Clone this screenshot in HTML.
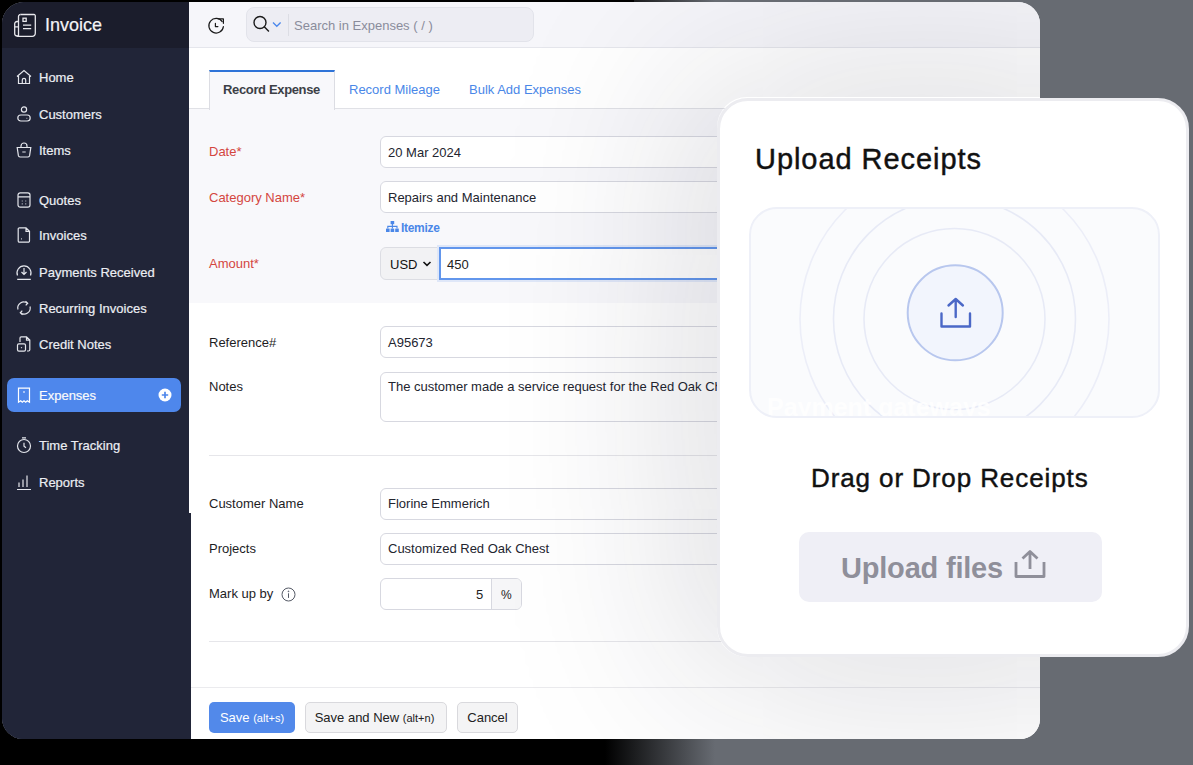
<!DOCTYPE html>
<html><head><meta charset="utf-8">
<style>
*{box-sizing:border-box;margin:0;padding:0}
html,body{width:1193px;height:765px;overflow:hidden}
body{position:relative;background:#676b72;font-family:"Liberation Sans",sans-serif;}
.a{position:absolute}
#bgblack{position:absolute;left:0;top:0;width:1193px;height:765px;
 background:linear-gradient(90deg,#000 0,#000 605px,#676b72 715px,#676b72 100%);}
#bgtop{position:absolute;left:0;top:0;width:634px;height:20px;background:#000}
#bgleft{position:absolute;left:0;top:0;width:20px;height:765px;background:#000}
#win{position:absolute;left:0;top:0;width:1040px;height:739px;overflow:hidden;
 clip-path:inset(2px 0 0 2px round 22px 22px 20px 21px);background:#fff}
.t{position:absolute;font-size:13px;line-height:16px;white-space:nowrap;color:#222}
.nav{color:#eceef3;left:39px;-webkit-text-stroke:0.2px #eceef3}
.nic{position:absolute;left:15px;width:18px;height:18px;overflow:visible}
.lbl{left:209px;color:#1d1d1f}
.red{color:#d4463f}
.inp{position:absolute;left:380px;width:600px;height:32px;border:1px solid #d7d8e0;border-radius:6px;background:#fff}
.itx{left:388px;color:#23252f}
.btn{position:absolute;top:702px;height:31px;border-radius:5px;font-size:13px;line-height:29px;white-space:nowrap;text-align:center}
.small{font-size:11px}
</style></head><body>
<div id="bgblack"></div><div id="bgtop"></div><div id="bgleft"></div>
<div id="win">
  <!-- sidebar -->
  <div class="a" style="left:0;top:0;width:189px;height:739px;background:#212538"></div>
  <div class="a" style="left:0;top:513px;width:191px;height:226px;background:#212538"></div>
  <div class="a" style="left:0;top:0;width:189px;height:48px;background:#1b1d2c"></div>
  <svg class="a" style="left:12px;top:12px" width="26" height="26" viewBox="0 0 26 26" fill="none" stroke="#e8e8ec" stroke-width="1.3">
    <path d="M8.5 2.5h13.5a1.3 1.3 0 0 1 1.3 1.3v17.5a3 3 0 0 1-3 3H5.2"/>
    <path d="M8.5 2.5a2 2 0 0 0-2 2v19.5"/>
    <path d="M6.5 9.5h-1.5a2.3 2.3 0 0 0-2.3 2.3v9.9a2.3 2.3 0 0 0 2.3 2.3h1.5"/>
    <path d="M2.7 14.8h3.8"/>
    <rect x="11" y="6.2" width="3.2" height="3.2"/>
    <path d="M11 13.2h8.2M11 16.7h8.2"/>
  </svg>
  <div class="t nav" style="left:45px;top:15px;font-size:18px;line-height:20px;color:#f4f4f6">Invoice</div>

  <svg class="nic" style="top:68px" viewBox="0 0 18 18" fill="none" stroke="#e4e6ec" stroke-width="1.2"><path d="M2 8.5L9 2.5l7 6M3.5 7.3v8.2h11V7.3M7.3 15.5v-3.5a1.7 1.7 0 0 1 3.4 0v3.5"/></svg>
  <div class="t nav" style="top:70px">Home</div>
  <svg class="nic" style="top:105px" viewBox="0 0 18 18" fill="none" stroke="#e4e6ec" stroke-width="1.2"><circle cx="9" cy="4.5" r="2.6"/><rect x="2.8" y="10" width="12.4" height="6" rx="3"/><path d="M11.6 13.3h.6"/></svg>
  <div class="t nav" style="top:107px">Customers</div>
  <svg class="nic" style="top:141px" viewBox="0 0 18 18" fill="none" stroke="#e4e6ec" stroke-width="1.2"><path d="M6 6.5V5a3 3 0 0 1 6 0v1.5M2.2 6.5h13.6l-1.2 8.2a1.6 1.6 0 0 1-1.6 1.3H5a1.6 1.6 0 0 1-1.6-1.3z M7.3 11h3.4"/></svg>
  <div class="t nav" style="top:143px">Items</div>

  <svg class="nic" style="top:191px" viewBox="0 0 18 18" fill="none" stroke="#e4e6ec" stroke-width="1.2"><rect x="3" y="1.8" width="12" height="14.4" rx="2.2"/><path d="M3 5.8h12M6.8 10h.8M10.4 10h.8M6.8 12.8h.8M10.4 12.8h.8"/></svg>
  <div class="t nav" style="top:193px">Quotes</div>
  <svg class="nic" style="top:226px" viewBox="0 0 18 18" fill="none" stroke="#e4e6ec" stroke-width="1.2"><path d="M4.5 1.8h6.5l3.5 3.5v9.6a1.3 1.3 0 0 1-1.3 1.3H4.5a1.3 1.3 0 0 1-1.3-1.3V3.1a1.3 1.3 0 0 1 1.3-1.3zM11 1.8v3.5h3.5M6 12.8h.8"/></svg>
  <div class="t nav" style="top:228px">Invoices</div>
  <svg class="nic" style="top:263px" viewBox="0 0 18 18" fill="none" stroke="#e4e6ec" stroke-width="1.2"><path d="M2.5 12.5A7 7 0 1 1 15.5 12.5M9 5v6.5M6.5 9l2.5 2.5 2.5-2.5M2.2 16.3h13.6"/></svg>
  <div class="t nav" style="top:265px">Payments Received</div>
  <svg class="nic" style="top:299px" viewBox="0 0 18 18" fill="none" stroke="#e4e6ec" stroke-width="1.2"><path d="M3 10.5a6 6 0 0 1 9.5-6.3M15 7.5a6 6 0 0 1-9.5 6.3M10.5 2.2l2.2 2-2 2.1M7.5 15.8l-2.2-2 2-2.1"/></svg>
  <div class="t nav" style="top:301px">Recurring Invoices</div>
  <svg class="nic" style="top:335px" viewBox="0 0 18 18" fill="none" stroke="#e4e6ec" stroke-width="1.2"><path d="M5 7V3a1.2 1.2 0 0 1 1.2-1.2h5.3l3.3 3.3v9.7a1.2 1.2 0 0 1-1.2 1.2H12M11.5 1.8v3.3h3.3"/><rect x="2.5" y="8.8" width="8" height="7.4" rx="1.4"/><path d="M6.5 12.2v1"/></svg>
  <div class="t nav" style="top:337px">Credit Notes</div>

  <div class="a" style="left:7px;top:378px;width:174px;height:34px;border-radius:7px;background:#4e87ec"></div>
  <svg class="nic" style="top:386px" viewBox="0 0 18 18" fill="none" stroke="#fff" stroke-width="1.2"><path d="M3.5 2.2h11v14l-2.2-1.4-1.6 1.4-1.7-1.4-1.7 1.4-1.6-1.4-2.2 1.4z M8 6h2M9 8.2v.1"/></svg>
  <div class="t nav" style="top:388px;color:#fff">Expenses</div>
  <svg class="a" style="left:158px;top:388px" width="14" height="14" viewBox="0 0 14 14"><circle cx="7" cy="7" r="6.5" fill="#fff"/><path d="M7 3.8v6.4M3.8 7h6.4" stroke="#4e87ec" stroke-width="1.7"/></svg>

  <svg class="nic" style="top:436px" viewBox="0 0 18 18" fill="none" stroke="#e4e6ec" stroke-width="1.2"><circle cx="9" cy="10" r="6.5"/><path d="M7 1.8h4M9 6.8v3.4l2 1.6"/></svg>
  <div class="t nav" style="top:438px">Time Tracking</div>
  <svg class="nic" style="top:473px" viewBox="0 0 18 18" fill="none" stroke="#e4e6ec" stroke-width="1.2"><path d="M4 14V9.5M8 14V6.5M12 14V2.5M2 16.5h14"/></svg>
  <div class="t nav" style="top:475px">Reports</div>

  <!-- content -->
  <div class="a" style="left:189px;top:0;width:851px;height:48px;background:#f6f6fa;border-bottom:1px solid #e5e6ec"></div>
  <svg class="a" style="left:206px;top:16px" width="20" height="20" viewBox="0 0 20 20" fill="none" stroke="#1a1a1a" stroke-width="1.2" stroke-linecap="round" stroke-linejoin="round"><path d="M16.2 5.6A7.3 7.3 0 1 0 17.4 10.6"/><path d="M12.8 2.9h4.6v4.4"/><path d="M9.4 7.4v3.2h2.5"/></svg>
  <div class="a" style="left:246px;top:7px;width:288px;height:35px;border-radius:8px;background:#ededf3;border:1px solid #e2e3ea"></div>
  <svg class="a" style="left:252px;top:15px" width="20" height="20" viewBox="0 0 20 20" fill="none" stroke="#1a1a1a" stroke-width="1.4"><circle cx="8" cy="7.5" r="6"/><path d="M12.3 11.8l4.6 4.6"/></svg>
  <svg class="a" style="left:271px;top:20px" width="12" height="10" viewBox="0 0 12 10" fill="none" stroke="#4a87ec" stroke-width="1.3"><path d="M2 2.5l3.8 3.8 3.8-3.8"/></svg>
  <div class="a" style="left:288px;top:14px;width:1px;height:22px;background:#dcdde4"></div>
  <div class="t" style="left:294px;top:18px;color:#8a8c9b">Search in Expenses ( / )</div>

  <!-- tabs -->
  <div class="a" style="left:189px;top:108px;width:851px;height:195px;background:#f8f8fb"></div>
  <div class="a" style="left:189px;top:108px;width:851px;height:1px;background:#e0e1e6"></div>
  <div class="a" style="left:209px;top:70px;width:126px;height:40px;background:#f8f8fb;border-left:1px solid #dcdde3;border-right:1px solid #dcdde3;border-top:2px solid #2f74d8"></div>
  <div class="t" style="left:223px;top:82px;font-weight:bold;color:#3c4046;letter-spacing:-0.35px">Record Expense</div>
  <div class="t" style="left:349px;top:82px;color:#4a87e8">Record Mileage</div>
  <div class="t" style="left:469px;top:82px;color:#4a87e8">Bulk Add Expenses</div>

  <!-- section 1 -->
  <div class="t lbl red" style="top:144px">Date*</div>
  <div class="inp" style="top:136px"></div>
  <div class="t itx" style="top:145px">20 Mar 2024</div>

  <div class="t lbl red" style="top:190px">Category Name*</div>
  <div class="inp" style="top:181px"></div>
  <div class="t itx" style="top:190px">Repairs and Maintenance</div>
  <svg class="a" style="left:386px;top:221px" width="13" height="11" viewBox="0 0 13 11" fill="#4a87e8"><rect x="4.6" y="0" width="3.6" height="3.2"/><rect x="0" y="7.6" width="3.6" height="3.4"/><rect x="4.6" y="7.6" width="3.6" height="3.4"/><rect x="9.2" y="7.6" width="3.6" height="3.4"/><path d="M6.4 3v4.6M1.8 7.6V5.4h9.2v2.2" fill="none" stroke="#4a87e8" stroke-width="1.1"/></svg>
  <div class="t" style="left:401px;top:220px;font-weight:bold;color:#4a87e8;font-size:12px;letter-spacing:-0.3px">Itemize</div>

  <div class="t lbl red" style="top:256px">Amount*</div>
  <div class="a" style="left:380px;top:247px;width:70px;height:33px;border:1px solid #dcdde3;border-radius:6px;background:#f2f2f4"></div>
  <div class="t" style="left:390px;top:257px;color:#111">USD</div>
  <svg class="a" style="left:421px;top:259px" width="12" height="10" viewBox="0 0 12 10" fill="none" stroke="#111" stroke-width="1.6"><path d="M2.5 3l3.5 3.4L9.5 3"/></svg>
  <div class="a" style="left:437px;top:245px;width:600px;height:37px;background:#dfe7f8"></div>
  <div class="a" style="left:439px;top:247px;width:600px;height:33px;border:2px solid #6296ec;background:#fff"></div>
  <div class="t" style="left:447px;top:257px;color:#222">450</div>

  <!-- section 2 -->
  <div class="t lbl" style="top:335px">Reference#</div>
  <div class="inp" style="top:326px"></div>
  <div class="t itx" style="top:335px">A95673</div>

  <div class="t lbl" style="top:379px">Notes</div>
  <div class="inp" style="top:372px;height:50px"></div>
  <div class="t itx" style="top:379px">The customer made a service request for the Red Oak Chest</div>

  <div class="a" style="left:209px;top:455px;width:831px;height:1px;background:#e6e6ea"></div>

  <div class="t lbl" style="top:496px">Customer Name</div>
  <div class="inp" style="top:488px"></div>
  <div class="t itx" style="top:496px">Florine Emmerich</div>

  <div class="t lbl" style="top:541px">Projects</div>
  <div class="inp" style="top:533px"></div>
  <div class="t itx" style="top:541px">Customized Red Oak Chest</div>

  <div class="t lbl" style="top:586px">Mark up by</div>
  <svg class="a" style="left:281px;top:587px" width="15" height="15" viewBox="0 0 15 15" fill="none" stroke="#555a66" stroke-width="1"><circle cx="7.5" cy="7.5" r="6.5"/><path d="M7.5 6.3v4.6"/><circle cx="7.5" cy="4.3" r=".4" fill="#555a66"/></svg>
  <div class="a" style="left:380px;top:578px;width:142px;height:32px;border:1px solid #d7d8e0;border-radius:6px;background:#fff"></div>
  <div class="a" style="left:491px;top:579px;width:30px;height:30px;background:#f6f6f8;border-left:1px solid #d7d8e0;border-radius:0 5px 5px 0"></div>
  <div class="t" style="left:476px;top:587px;color:#222">5</div>
  <div class="t" style="left:501px;top:587px;color:#222;font-size:12px">%</div>

  <div class="a" style="left:209px;top:641px;width:831px;height:1px;background:#e6e6ea"></div>

  <!-- footer -->
  <div class="a" style="left:191px;top:687px;width:849px;height:52px;background:#fff;border-top:1px solid #ebebee"></div>
  <div class="btn" style="left:209px;width:86px;background:#5289ea;color:#fff;padding-top:1px">Save <span class="small">(alt+s)</span></div>
  <div class="btn" style="left:305px;width:142px;background:#f4f4f5;border:1px solid #d9d9dd;color:#222;text-indent:-3px">Save and New <span class="small">(alt+n)</span></div>
  <div class="btn" style="left:457px;width:61px;background:#f4f4f5;border:1px solid #d9d9dd;color:#222">Cancel</div>

  <!-- card shadow inside window -->
  <div class="a" style="left:717px;top:97px;width:472px;height:560px;border-radius:30px;box-shadow:0 0 200px 20px rgba(30,30,50,0.18)"></div>
</div>
<!-- upload card -->
<div class="a" style="left:717px;top:98px;width:472px;height:559px;border-radius:31px;background:#fff;border:3px solid #ececf0"></div>
<div class="t" style="left:755px;top:143px;font-size:29px;line-height:32px;color:#111;letter-spacing:0.95px;-webkit-text-stroke:0.45px #111">Upload Receipts</div>
<div class="a" style="left:749px;top:207px;width:411px;height:211px;border-radius:28px;background:#fafbfd;border:2.5px solid #eef0f8;overflow:hidden">
  <svg class="a" style="left:-2.5px;top:-2.5px" width="411" height="211" viewBox="749 207 411 211" fill="none">
    <circle cx="954.5" cy="319" r="154.5" stroke="#eceef8" stroke-width="1.6"/>
    <circle cx="954.5" cy="319" r="121" stroke="#e7eaf6" stroke-width="1.6"/>
    <circle cx="954.5" cy="319" r="90.5" stroke="#e7eaf6" stroke-width="1.6"/>
    <circle cx="955.2" cy="312.8" r="47.5" fill="#f2f5fd" stroke="#b8c7ee" stroke-width="2"/>
    <path d="M941.5 313.5v13h28.5v-13" stroke="#4b68c7" stroke-width="2.4" stroke-linecap="round" stroke-linejoin="round"/>
    <path d="M955.7 317v-17M948.5 305.5l7.2-6.5 7.2 6.5" stroke="#4b68c7" stroke-width="2.4" stroke-linecap="round" stroke-linejoin="round"/>
  </svg>
  <div class="t" style="left:16px;top:184px;font-size:25px;line-height:28px;font-weight:bold;color:rgba(255,255,255,0.85)">Payment gateways</div>
</div>
<div class="t" style="left:811px;top:463px;font-size:26px;line-height:30px;color:#111;letter-spacing:0.9px;-webkit-text-stroke:0.45px #111">Drag or Drop Receipts</div>
<div class="a" style="left:799px;top:532px;width:303px;height:70px;border-radius:10px;background:#efeff6"></div>
<div class="t" style="left:841px;top:552px;font-size:29px;line-height:32px;font-weight:bold;color:#8f8f9a;letter-spacing:-0.2px">Upload files</div>
<svg class="a" style="left:1012px;top:548px" width="36" height="32" viewBox="0 0 36 32" fill="none" stroke="#8f8f9a" stroke-width="2.8" stroke-linejoin="round"><path d="M4 14v14.5h28V14"/><path d="M18 21V4M10.5 10.5L18 3.5l7.5 7"/></svg>
</body></html>
